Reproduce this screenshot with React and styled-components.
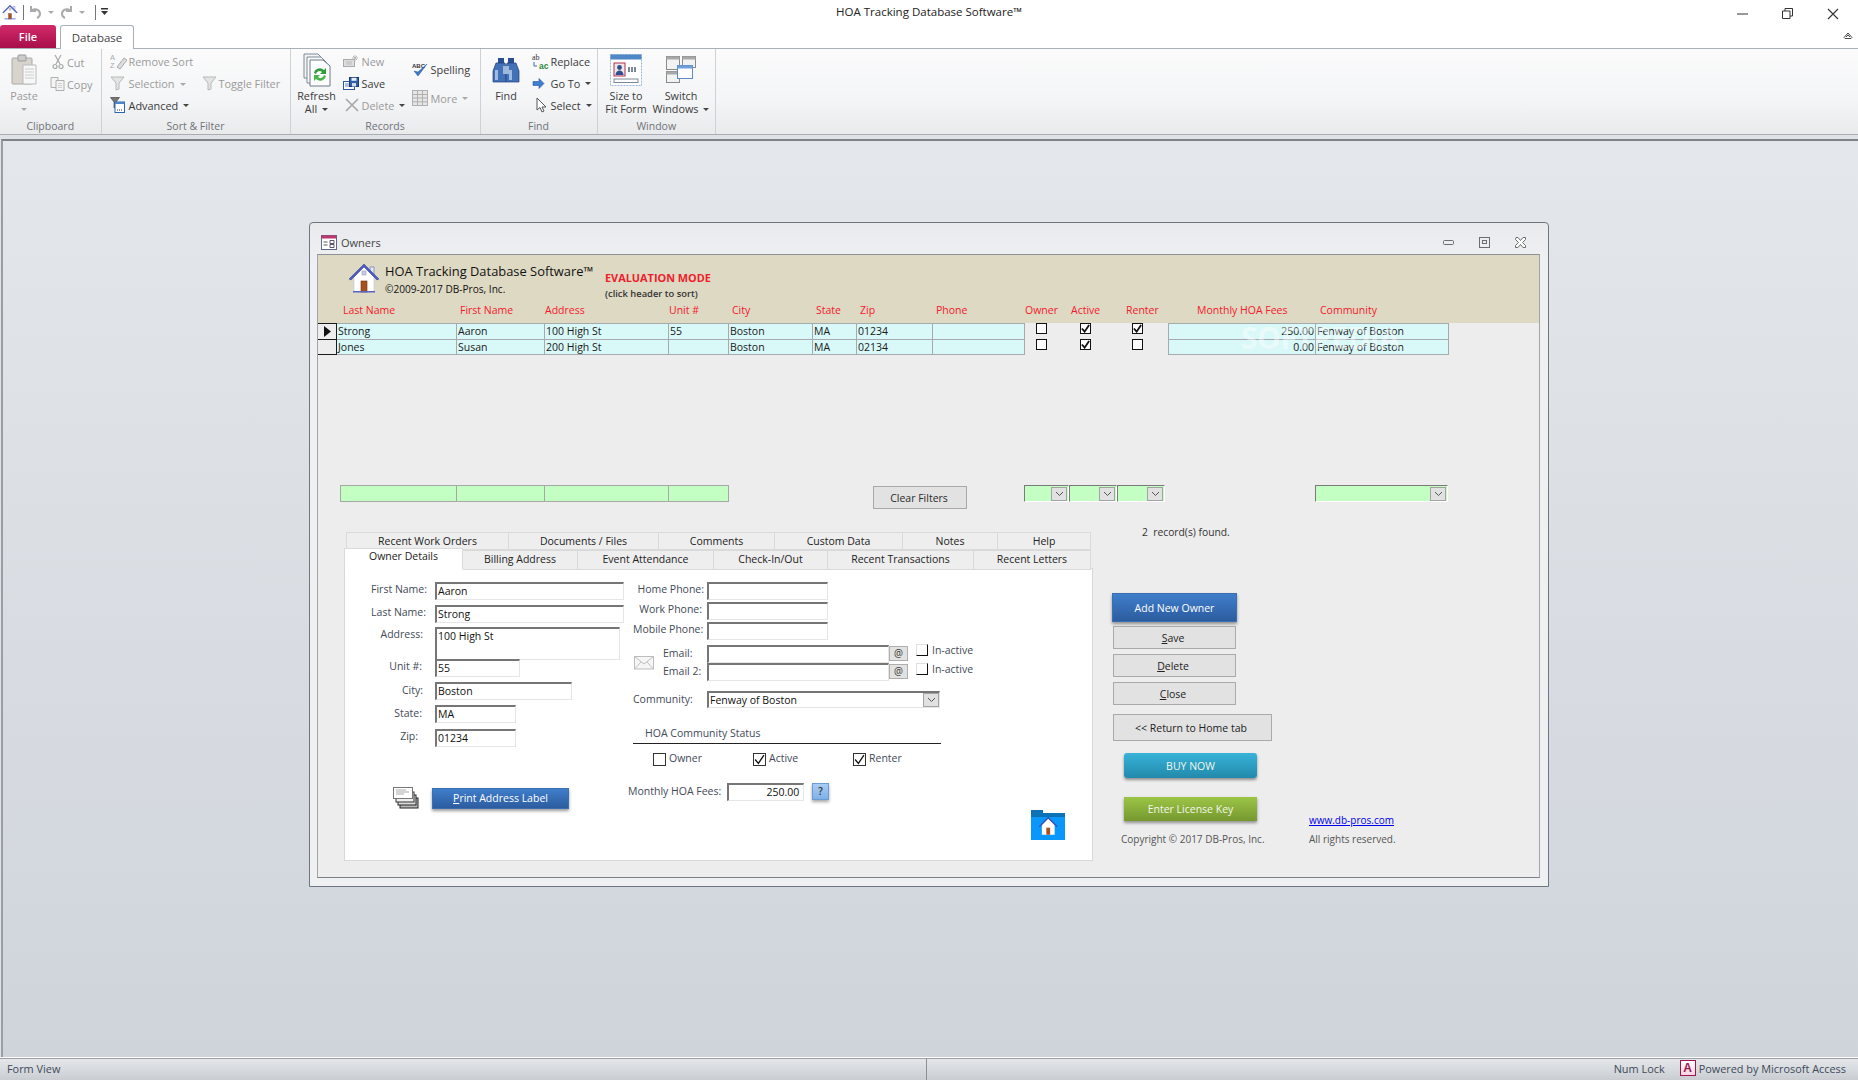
import React from 'react'
import styled, { createGlobalStyle } from 'styled-components'

const GlobalStyle = createGlobalStyle`
  html, body, #root { margin: 0; padding: 0; height: 100%; }
  body {
    overflow: hidden;
    background: #fff;
    font-family: "Open Sans", "Noto Sans", "Liberation Sans", sans-serif;
    font-size: 10.5px;
    color: #2b2b2b;
  }
  * { box-sizing: border-box; }
  u { text-decoration-thickness: 1px; }
`

const Shell = styled.div`
  width: 1858px;
  height: 1080px;
  display: flex;
  flex-direction: column;
  overflow: hidden;
`

/* ---- title bar ---- */
const TitleBar = styled.div`
  height: 25px;
  flex: none;
  display: grid;
  grid-template-columns: 1fr auto 1fr;
  align-items: center;
  background: #fff;
`

const Qat = styled.div`
  display: flex;
  align-items: center;
  padding: 0 0 1px 2px;
  gap: 3px;
`

const QatSep = styled.span`
  width: 1px;
  height: 15px;
  background: #777;
  margin: 0 2px 0 ${p => p.$ml || 2}px;
`

const QatDrop = styled.span`
  width: 0;
  height: 0;
  border-left: 3px solid transparent;
  border-right: 3px solid transparent;
  border-top: 3px solid #aaa;
  margin: 0 3px;
`

const WindowTitle = styled.div`
  font-size: 11.5px;
  color: #222;
  padding-bottom: 2px;
`

const WinControls = styled.div`
  display: flex;
  justify-content: flex-end;
  gap: 34px;
  padding: 2px 19px 0 0;
  align-items: center;
`

/* ---- ribbon tabs ---- */
const TabStrip = styled.div`
  height: 24px;
  flex: none;
  display: flex;
  align-items: flex-end;
  gap: 4px;
  position: relative;
  border-bottom: 1px solid #a9b0b8;
  background: #fff;
`

const FileTab = styled.div`
  width: 56px;
  height: 23px;
  background: linear-gradient(#d22a6a, #a80f4a);
  color: #fff;
  font-size: 11px;
  font-weight: 600;
  border-radius: 3px 3px 0 0;
  display: flex;
  align-items: center;
  justify-content: center;
`

const RibbonTab = styled.div`
  width: 74px;
  height: 24px;
  margin-bottom: -1px;
  background: #fff;
  border: 1px solid #a9b0b8;
  border-bottom: none;
  border-radius: 3px 3px 0 0;
  font-size: 11.5px;
  display: flex;
  align-items: center;
  justify-content: center;
  color: #444;
`

const Collapse = styled.span`
  position: absolute;
  right: 5px;
  top: 7px;
  display: flex;
`

/* ---- ribbon ---- */
const Ribbon = styled.div`
  height: 86px;
  flex: none;
  display: flex;
  background: linear-gradient(#fbfbfc, #f4f5f6 60%, #e9eaec);
  border-bottom: 1px solid #a9adb2;
`

const Group = styled.div`
  width: ${p => p.$w}px;
  display: flex;
  flex-direction: column;
  border-right: 1px solid #cfd1d4;
`

const GroupBody = styled.div`
  flex: 1;
  display: flex;
  padding: 2px 0 0 ${p => p.$pl || 0}px;
  min-height: 0;
`

const GroupLabel = styled.div`
  height: 18px;
  text-align: center;
  font-size: 10.5px;
  line-height: 20px;
  color: #6e7378;
`

const BigBtn = styled.div`
  width: ${p => p.$w}px;
  flex: none;
  display: flex;
  flex-direction: column;
  align-items: center;
  font-size: 10.8px;
  line-height: 13px;
  text-align: center;
  white-space: nowrap;
  color: ${p => (p.$off ? '#9a9a9a' : '#3a3a3a')};
`

const BigIcon = styled.div`
  height: 37px;
  display: flex;
  align-items: center;
  justify-content: center;
  margin-bottom: 1px;
`

const Stack = styled.div`
  display: flex;
  flex-direction: column;
  width: ${p => (p.$w ? `${p.$w}px` : 'auto')};
  flex: none;
  padding-top: ${p => p.$top || 0}px;
  gap: ${p => p.$gap || 0}px;
`

const SmallBtn = styled.div`
  height: 22px;
  display: flex;
  align-items: center;
  font-size: 10.9px;
  white-space: nowrap;
  color: ${p => (p.$off ? '#9a9a9a' : '#3a3a3a')};
`

const SmallIcon = styled.span`
  width: ${p => p.$w || 19}px;
  flex: none;
  display: flex;
  align-items: center;
  justify-content: ${p => p.$align || 'flex-start'};
`

const SelectionSlot = styled.span`
  width: 73px;
`

const Caret = styled.span`
  display: inline-block;
  width: 0;
  height: 0;
  margin-left: ${p => (p.$flush ? 0 : 5)}px;
  vertical-align: 2px;
  border-left: 3px solid transparent;
  border-right: 3px solid transparent;
  border-top: 3px solid ${p => (p.$off ? '#aaa' : '#444')};
`

/* ---- client area ---- */
const Client = styled.div`
  flex: 1;
  min-height: 0;
  display: flex;
  background: #dfe2e6;
  padding: 4px 0 0 1px;
`

const MdiArea = styled.div`
  flex: 1;
  min-width: 0;
  background: linear-gradient(#e4e7eb, #cfd4db);
  border-top: 2px solid #7f8388;
  border-left: 2px solid #9a9ea3;
  padding: 81px 0 0 306px;
`

const MdiWindow = styled.div`
  width: 1240px;
  height: 665px;
  display: flex;
  flex-direction: column;
  border: 1px solid #6f7680;
  border-radius: 4px 4px 0 0;
  background: linear-gradient(#e8eaee, #eef0f2 40px);
  padding: 0 8px 8px 7px;
`

const MdiTitle = styled.div`
  height: 31px;
  flex: none;
  display: flex;
  align-items: center;
  padding: 8px 14px 0 4px;
  gap: 4px;
  font-size: 11px;
  color: #444;
`

const MdiButtons = styled.div`
  margin-left: auto;
  display: flex;
  align-items: center;
  gap: 25px;
`

const FormBody = styled.div`
  flex: 1;
  min-height: 0;
  display: flex;
  flex-direction: column;
  background: #ededed;
  border-top: 1px solid #8d9095;
  border-left: 1px solid #a0a3a8;
  border-right: 1px solid #a0a3a8;
  border-bottom: 1px solid #7d8187;
`

const Banner = styled.div`
  height: 68px;
  flex: none;
  background: #ded9c3;
  display: flex;
  flex-direction: column;
`

const BrandRow = styled.div`
  flex: 1;
  min-height: 0;
  display: flex;
  padding: 7px 0 0 30px;
`

const BrandText = styled.div`
  margin-left: 5px;
  width: 220px;
  color: #111;
`

const BrandName = styled.div`
  font-size: 12.9px;
  line-height: 17px;
  margin-top: 1px;
  white-space: nowrap;
`

const BrandCopy = styled.div`
  font-size: 10.1px;
  line-height: 13px;
  margin-top: 3px;
`

const EvalBox = styled.div`
  padding-top: 9px;
`

const EvalTitle = styled.div`
  font-size: 10.9px;
  font-weight: 700;
  line-height: 14px;
  color: #f01c2c;
`

const EvalHint = styled.div`
  font-size: 9.4px;
  font-weight: 600;
  line-height: 12px;
  margin-top: 3px;
  color: #333;
`

const COLUMNS = '19px 120px 88px 124px 60px 84px 44px 76px 92px 36px 51px 56px 148px 133px'

const HeaderRow = styled.div`
  display: grid;
  grid-template-columns: ${COLUMNS};
  height: 22px;
  flex: none;
  align-items: flex-start;
  line-height: 14px;
  padding-top: 2px;
`

const HeaderLabel = styled.div`
  font-size: 10.5px;
  color: #f4182c;
  padding-left: ${p => p.$pad || 0}px;
  white-space: nowrap;
`

const GridWrap = styled.div`
  position: relative;
  height: 162px;
  flex: none;
`

const GridRow = styled.div`
  display: grid;
  grid-template-columns: ${COLUMNS};
  height: 16px;
`

const RowSelector = styled.div`
  border: 1px solid #1c1c1c;
  border-left: none;
  border-bottom-width: ${p => (p.$last ? 1 : 0)}px;
  background: #ededed;
  display: flex;
  align-items: center;
  justify-content: center;
`

const Cell = styled.div`
  background: #d9f8f8;
  border-top: 1px solid #a6aaae;
  border-right: 1px solid #a6aaae;
  border-bottom: ${p => (p.$last ? '1px solid #a6aaae' : 'none')};
  border-left: ${p => (p.$first ? '1px solid #a6aaae' : 'none')};
  font-size: 10.5px;
  line-height: 14px;
  padding: 0 1px;
  color: #1a1a1a;
  white-space: nowrap;
  overflow: hidden;
  text-align: ${p => (p.$right ? 'right' : 'left')};
`

const CheckCell = styled.div`
  display: flex;
  justify-content: center;
  padding-right: ${p => p.$pad || 0}px;
`

const GridBox = styled.span`
  width: 11px;
  height: 11px;
  border: 1px solid #111;
  background: #fff;
  display: flex;
  align-items: center;
  justify-content: center;
`

const Watermark = styled.div`
  position: absolute;
  left: 923px;
  top: -6px;
  font-size: 30px;
  font-weight: 700;
  letter-spacing: -0.5px;
  color: rgba(255, 255, 255, 0.42);
  pointer-events: none;
`

const FilterRow = styled.div`
  height: 24px;
  flex: none;
  display: flex;
  padding-left: 22px;
  align-items: flex-start;
`

const FilterBox = styled.div`
  width: ${p => p.$w}px;
  height: 17px;
  background: #c3fec3;
  border: 1px solid #a5a8a5;
  border-left: ${p => (p.$first ? '1px solid #a5a8a5' : 'none')};
`

const ClearButton = styled.div`
  width: 94px;
  height: 23px;
  margin: 1px 0 0 144px;
  background: #e2e2e2;
  border: 1px solid #a9a9a9;
  font-size: 10.5px;
  display: flex;
  align-items: center;
  justify-content: center;
  padding-right: 2px;
`

const FilterCombo = styled.div`
  width: ${p => p.$w}px;
  height: 17px;
  margin-left: ${p => p.$ml || 0}px;
  background: #c3fec3;
  border-top: 1px solid #7a7a7a;
  border-left: 1px solid #7a7a7a;
  border-right: 1px solid #fff;
  border-bottom: 1px solid #fff;
  display: flex;
  justify-content: flex-end;
  align-items: center;
  padding-right: 1px;
`

const ComboArrow = styled.span`
  width: 16px;
  height: 14px;
  background: #e1e1e1;
  border: 1px solid #a3a3a3;
  display: flex;
  align-items: center;
  justify-content: center;
`

const InputArrow = styled(ComboArrow)`
  position: absolute;
  right: 0;
  top: 0;
`

const Lower = styled.div`
  flex: 1;
  min-height: 0;
  display: flex;
  padding: 23px 0 0 26px;
`

const TabArea = styled.div`
  width: 750px;
  flex: none;
  display: flex;
  flex-direction: column;
`

const TabRowBack = styled.div`
  display: flex;
  height: 18px;
  padding-left: 2px;
`

const TabRowFront = styled.div`
  display: flex;
  height: 18px;
  margin-top: -2px;
  position: relative;
`

const Tab = styled.div`
  width: ${p => p.$w}px;
  height: ${p => (p.$active ? 21 : p.$front ? 20 : 18)}px;
  margin-top: ${p => (p.$front && !p.$active ? 2 : 0)}px;
  background: ${p => (p.$active ? '#fff' : '#eeeeee')};
  border: 1px solid #dadada;
  border-left-width: ${p => (p.$active || p.$firstBack ? 1 : 0)}px;
  border-bottom-width: ${p => (p.$active ? 0 : 1)}px;
  font-size: 10.5px;
  line-height: ${p => (p.$active ? 15 : 16)}px;
  text-align: center;
  color: #222;
  white-space: nowrap;
  position: relative;
  z-index: ${p => (p.$active ? 2 : 1)};
`

const TabPanel = styled.div`
  width: 749px;
  height: 293px;
  margin-top: 2px;
  background: #fff;
  border: 1px solid #d8d8d8;
  display: flex;
  position: relative;
`

const LeftFields = styled.div`
  width: 280px;
  flex: none;
  padding-top: 13px;
  display: flex;
  flex-direction: column;
`

const FieldRow = styled.div`
  display: flex;
  align-items: flex-start;
  margin-top: ${p => p.$top || 0}px;
`

const FieldLabel = styled.div`
  width: ${p => p.$w}px;
  flex: none;
  margin-left: ${p => p.$ml || 0}px;
  text-align: right;
  padding-right: ${p => p.$pr || 0}px;
  padding-top: ${p => p.$pt || 0}px;
  font-size: 10.5px;
  line-height: 14px;
  color: #3f4a57;
  white-space: nowrap;
`

const Input = styled.div`
  width: ${p => p.$w}px;
  height: ${p => p.$h || 18}px;
  flex: none;
  border-top: 2px solid #767676;
  border-left: 2px solid #767676;
  border-right: 1px solid #e6e6e6;
  border-bottom: 1px solid #e6e6e6;
  background: #fff;
  font-size: 10.5px;
  line-height: 14px;
  padding: 0 1px 0 1px;
  color: #111;
  text-align: ${p => (p.$right ? 'right' : 'left')};
  white-space: nowrap;
  position: relative;
`

const PrintRow = styled.div`
  display: flex;
  align-items: center;
  margin-top: 40px;
  padding-left: 48px;
  gap: 13px;
`

const BlueButton = styled.div`
  width: ${p => p.$w}px;
  height: ${p => p.$h}px;
  flex: none;
  background: linear-gradient(#3f7ecb, #2c5c9f);
  border: 1px solid #3b6fb4;
  box-shadow: 0 2px 3px rgba(0, 0, 0, 0.4);
  color: #fff;
  font-size: 10.5px;
  display: flex;
  align-items: center;
  justify-content: center;
`

const MidFields = styled.div`
  width: 340px;
  flex: none;
  padding-top: 13px;
  padding-left: 8px;
  display: flex;
  flex-direction: column;
`

const EmailBlock = styled.div`
  display: grid;
  grid-template-columns: 30px 44px 182px 27px auto;
  grid-auto-rows: 18px;
  margin-top: 5px;
  align-items: start;
`

const Envelope = styled.div`
  grid-row: 1 / span 2;
  padding-top: 11px;
  padding-left: 1px;
`

const EmailLabel = styled.div`
  grid-column: 2;
  font-size: 10.5px;
  color: #3f4a57;
  line-height: 14px;
  padding-top: 1px;
  white-space: nowrap;
`

const AtButton = styled.div`
  width: 19px;
  height: 15px;
  margin-top: 1px;
  background: #e2e2e2;
  border: 1px solid #aeaeae;
  font-size: 10px;
  line-height: 12px;
  text-align: center;
  color: #333;
`

const Inactive = styled.div`
  display: flex;
  align-items: center;
  font-size: 10.5px;
  gap: 4px;
  color: #3f4a57;
  white-space: nowrap;
  margin-top: ${p => p.$mt || 0}px;
`

const FlatBox = styled.span`
  width: 12px;
  height: 12px;
  border-right: 1px solid #111;
  border-bottom: 1px solid #111;
  border-top: 1px solid #e0e0e0;
  border-left: 1px solid #e0e0e0;
`

const StatusHead = styled.div`
  width: 308px;
  margin: 18px 0 0 0;
  padding: 0 0 2px 12px;
  border-bottom: 1px solid #222;
  font-size: 10.5px;
  line-height: 15px;
  color: #3f4a57;
`

const StatusRow = styled.div`
  display: flex;
  padding: 9px 0 0 20px;
`

const StatusItem = styled.div`
  width: 100px;
  display: flex;
  align-items: flex-start;
  gap: 3px;
  font-size: 10.5px;
  line-height: 11px;
  color: #3f4a57;
`

const StatusBox = styled.span`
  width: 13px;
  height: 13px;
  flex: none;
  border: 1px solid #333;
  background: #fff;
  display: flex;
  align-items: center;
  justify-content: center;
`

const HelpButton = styled.div`
  width: 17px;
  height: 17px;
  margin-left: 8px;
  background: linear-gradient(#a9cdf3, #7fb0e6);
  border: 1px solid #6d9bd4;
  box-shadow: 0 2px 3px rgba(0, 0, 0, 0.35);
  font-size: 10px;
  font-weight: 600;
  text-align: center;
  line-height: 14px;
  color: #333;
`

const FolderSpot = styled.div`
  position: absolute;
  left: 686px;
  top: 241px;
  display: flex;
`

const Side = styled.div`
  flex: 1;
  display: flex;
  position: relative;
  flex-direction: column;
  padding: 61px 0 0 18px;
`

const FoundText = styled.div`
  position: absolute;
  left: 48px;
  top: -7px;
  font-size: 10.3px;
  line-height: 14px;
  color: #333;
  white-space: nowrap;
`

const GrayButton = styled.div`
  width: ${p => p.$w}px;
  height: ${p => p.$h}px;
  margin-top: ${p => p.$mt || 0}px;
  margin-left: 1px;
  background: #e2e2e2;
  border: 1px solid #aaaaaa;
  font-size: 10.5px;
  color: #222;
  display: flex;
  align-items: center;
  justify-content: center;
  padding-right: 3px;
`

const GradButton = styled.div`
  width: 133px;
  height: ${p => p.$h}px;
  margin-top: ${p => p.$mt}px;
  margin-left: 12px;
  background: ${p => p.$bg};
  border-radius: ${p => p.$r || 0}px;
  box-shadow: 0 2px 3px rgba(0, 0, 0, 0.4);
  color: #f2f6ea;
  font-size: 10.5px;
  display: flex;
  align-items: center;
  justify-content: center;
`

const FootRow = styled.div`
  display: flex;
  margin-top: ${p => p.$mt || 0}px;
  font-size: 10px;
  line-height: 14px;
  color: #555;
  white-space: nowrap;
`

const FootCell = styled.div`
  width: ${p => p.$w}px;
  flex: none;
  padding-left: ${p => p.$pad || 0}px;
`

const Link = styled.a`
  color: #0000ee;
  text-decoration: underline;
`

/* ---- status bar ---- */
const StatusBar = styled.div`
  height: 23px;
  flex: none;
  border-top: 1px solid #fff;
  display: flex;
  background: linear-gradient(#e6e8eb, #c9cdd2);
  box-shadow: inset 0 1px 0 #9aa0a6;
  font-size: 10.9px;
  color: #3e4a5a;
`

const StatusLeft = styled.div`
  width: 927px;
  padding: 0 0 2px 7px;
  display: flex;
  align-items: center;
  border-right: 1px solid #8b9096;
`

const StatusRight = styled.div`
  flex: 1;
  display: flex;
  align-items: center;
  justify-content: flex-end;
  padding: 0 12px 2px 0;
`

const AccessBadge = styled.span`
  width: 16px;
  height: 16px;
  margin: 0 3px 0 15px;
  border: 1px solid #a0154f;
  background: linear-gradient(#fff, #f6d3e0);
  color: #a0154f;
  font-size: 12px;
  font-weight: 800;
  font-family: "Liberation Sans", sans-serif;
  display: flex;
  align-items: center;
  justify-content: center;
`

/* ---- drawings ---- */
const HouseIcon = ({ size = 32 }) => (
  <svg width={size} height={size} viewBox="0 0 32 32">
    <rect x="22" y="5" width="4" height="9" fill="#e4e6f4" stroke="#7d86c8" strokeWidth=".8" />
    <path d="M6 15 16 4l10 11v15H6z" fill="#fff" stroke="#c8cbe6" strokeWidth=".7" />
    <path d="M1 17 16 2l15 15-2 1L16 5 3 18z" fill="#4b5bc0" stroke="#2e3a8c" strokeWidth=".5" />
    <rect x="14" y="9" width="4" height="4" fill="#c9cce0" stroke="#8a8fb0" strokeWidth=".5" />
    <rect x="13" y="19" width="6" height="11" fill="#a8511e" stroke="#70330f" strokeWidth=".6" />
    <rect x="5" y="29" width="22" height="1.5" fill="#5a63c0" />
  </svg>
)

const ClipboardIcon = () => (
  <svg width="28" height="32" viewBox="0 0 28 32">
    <rect x="2" y="4" width="20" height="26" rx="1" fill="#d8d4cc" stroke="#aaa" />
    <rect x="8" y="1" width="8" height="6" rx="1" fill="#ccc" stroke="#999" />
    <path d="M13 11h13v19H13z" fill="#f7f7f7" stroke="#bbb" />
    <path d="M15 15h9M15 18h9M15 21h9M15 24h9" stroke="#ccc" />
  </svg>
)

const ScissorsIcon = () => (
  <svg width="12" height="16" viewBox="0 0 12 16" fill="none" stroke="#a8a8a8" strokeWidth="1.2">
    <path d="M3 1l5 9M9 1 4 10" />
    <circle cx="3" cy="12.5" r="2" />
    <circle cx="9" cy="12.5" r="2" />
  </svg>
)

const CopyIcon = () => (
  <svg width="15" height="14" viewBox="0 0 15 14" fill="#f4f4f4" stroke="#b0b0b0">
    <path d="M1 .5h7v10H1z" />
    <path d="M6 3.5h8v10H6z" />
    <path d="M8 6.5h4M8 8.5h4M8 10.5h4" stroke="#cfcfcf" />
  </svg>
)

const SortIcon = () => (
  <svg width="17" height="17" viewBox="0 0 17 17">
    <text x="0" y="7" fontSize="7.5" fill="#aaa" fontFamily="Liberation Sans">A</text>
    <text x="0" y="15" fontSize="7.5" fill="#aaa" fontFamily="Liberation Sans">Z</text>
    <path d="M7 14 14 5l3 2-7 9z" fill="#ddd" stroke="#aaa" />
  </svg>
)

const FilterIcon = ({ color = '#b8b8b8', fill = '#e4e4e4' }) => (
  <svg width="15" height="15" viewBox="0 0 15 15">
    <path d="M1 1h13L9 7v6l-3 1V7z" fill={fill} stroke={color} />
  </svg>
)

const AdvancedIcon = () => (
  <svg width="15" height="16" viewBox="0 0 15 16">
    <path d="M.5.5h9L6 5v5L4 11V5z" fill="#777" stroke="#333" strokeWidth=".6" />
    <rect x="5" y="5" width="9.5" height="10.5" fill="#fff" stroke="#2c65ab" />
    <rect x="5" y="5" width="9.5" height="2" fill="#4c86c8" />
    <path d="M7 13h1M9 13h1M11 13h1" stroke="#333" />
  </svg>
)

const RefreshIcon = () => (
  <svg width="28" height="34" viewBox="0 0 28 34">
    <path d="M1 1h14l6 6v18H1z" fill="#f4f4f4" stroke="#7c8a99" />
    <path d="M4 4h14l6 6v20H4z" fill="#fbfbfb" stroke="#7c8a99" />
    <path d="M7 7h13l7 6v20H7z" fill="#fff" stroke="#6d7b8a" />
    <path d="M11 20a6 6 0 0 1 10-3l2-2v6h-6l2-2a3.6 3.6 0 0 0-6 2z" fill="#2f9d3a" />
    <path d="M23 23a6 6 0 0 1-10 3l-2 2v-6h6l-2 2a3.6 3.6 0 0 0 6-2z" fill="#49b64b" />
  </svg>
)

const NewIcon = () => (
  <svg width="16" height="13" viewBox="0 0 16 13">
    <rect x=".5" y="4.5" width="11" height="7" fill="#ddd" stroke="#aaa" />
    <path d="M3 7h6M3 9h6" stroke="#bbb" />
    <path d="M12 0v6M9 3h6M10 1l4 4M14 1l-4 4" stroke="#bbb" />
  </svg>
)

const SaveIcon = () => (
  <svg width="16" height="13" viewBox="0 0 16 13">
    <rect x=".5" y="4.5" width="11" height="8" fill="#fff" stroke="#2d5a9a" />
    <path d="M2 7h7M2 9h7" stroke="#5a84bb" />
    <rect x="6.5" y=".5" width="9" height="9" fill="#2f5fa6" stroke="#1b3c72" />
    <rect x="8.5" y=".8" width="5" height="3" fill="#e8eef6" />
    <rect x="9" y="6" width="4" height="3.5" fill="#d4dde8" />
  </svg>
)

const DeleteIcon = () => (
  <svg width="14" height="14" viewBox="0 0 14 14" stroke="#a8a8a8" strokeWidth="1.7" fill="none">
    <path d="M1 1l12 12M13 1 1 13" />
  </svg>
)

const SpellIcon = () => (
  <svg width="17" height="17" viewBox="0 0 17 17">
    <text x="0" y="6.5" fontSize="6" fontWeight="700" fill="#333" fontFamily="Liberation Sans">ABC</text>
    <path d="M2 10l4 5L15 3l-9 8z" fill="#3b78c8" stroke="#24559a" strokeWidth=".5" />
  </svg>
)

const MoreIcon = () => (
  <svg width="16" height="16" viewBox="0 0 16 16" fill="#e6e6e6" stroke="#b0b0b0">
    <rect x=".5" y=".5" width="15" height="15" />
    <path d="M.5 4.5h15M.5 8h15M.5 11.8h15M5.5.5v15M10.5.5v15" />
  </svg>
)

const BinocularIcon = () => (
  <svg width="28" height="26" viewBox="0 0 28 26">
    <rect x="6" y="1" width="6" height="6" fill="#2a4f92" />
    <rect x="16" y="1" width="6" height="6" fill="#2a4f92" />
    <path d="M4 6h9l1 5v14H1V14z" fill="#4271b8" stroke="#1f3c78" strokeWidth=".7" />
    <path d="M15 6h9l3 8v11H14V11z" fill="#4271b8" stroke="#1f3c78" strokeWidth=".7" />
    <rect x="11" y="9" width="6" height="8" fill="#9db8dd" />
    <path d="M3 13h3v10H3zM17 13h3v10h-3z" fill="#9fbbe4" />
  </svg>
)

const ReplaceIcon = () => (
  <svg width="17" height="17" viewBox="0 0 17 17">
    <text x="0" y="7" fontSize="8" fill="#333" fontFamily="Liberation Serif">ab</text>
    <text x="7" y="15.5" fontSize="8.5" fontWeight="700" fill="#2e8b3b" fontFamily="Liberation Sans">ac</text>
    <path d="M2 9v4h3" fill="none" stroke="#3a6db4" />
  </svg>
)

const ArrowIcon = () => (
  <svg width="13" height="11" viewBox="0 0 13 11">
    <path d="M1 3.5h6V.5l5 5-5 5v-3H1z" fill="#3f7fd0" stroke="#28569c" strokeWidth=".6" />
  </svg>
)

const CursorIcon = () => (
  <svg width="11" height="16" viewBox="0 0 11 16">
    <path d="M1 1v12l3-2.5L6 15l2-1-2-4h4z" fill="#fff" stroke="#555" />
  </svg>
)

const SizeFormIcon = () => (
  <svg width="32" height="32" viewBox="0 0 32 32">
    <rect x=".5" y=".5" width="31" height="31" fill="#fff" stroke="#9bb6d8" strokeDasharray="2 1" />
    <rect x=".5" y=".5" width="31" height="5" fill="#4f86c6" />
    <rect x="4" y="9" width="11" height="13" fill="#f0e6e6" stroke="#b03050" />
    <circle cx="9.5" cy="13.5" r="2.4" fill="#2c4f91" />
    <path d="M5.5 21c0-6 8-6 8 0z" fill="#2c4f91" />
    <path d="M18 13h2v5h-2zM21 13h2v5h-2zM24 13h2v5h-2z" fill="#7a8796" />
    <rect x="4" y="25" width="24" height="3.5" fill="#fff" stroke="#7a8796" />
  </svg>
)

const SwitchIcon = () => (
  <svg width="30" height="27" viewBox="0 0 30 27">
    <rect x=".5" y=".5" width="13" height="13" fill="#f2f2f2" stroke="#8a8a8a" />
    <rect x=".5" y=".5" width="13" height="3" fill="#a8a8a8" />
    <rect x="16.5" y=".5" width="13" height="11" fill="#f2f2f2" stroke="#8a8a8a" />
    <rect x="16.5" y=".5" width="13" height="3" fill="#a8a8a8" />
    <rect x=".5" y="15.5" width="13" height="11" fill="#f2f2f2" stroke="#8a8a8a" />
    <rect x=".5" y="15.5" width="13" height="3" fill="#a8a8a8" />
    <rect x="11.5" y="9.5" width="15" height="13" fill="#fff" stroke="#5b8ac7" />
    <rect x="11.5" y="9.5" width="15" height="3" fill="#6e9fdb" />
  </svg>
)

const FormIcon = () => (
  <svg width="16" height="15" viewBox="0 0 16 15">
    <rect x=".5" y=".5" width="15" height="14" fill="#fff" stroke="#5c6a85" />
    <rect x=".5" y=".5" width="15" height="3" fill="#c0356e" />
    <path d="M2.5 7h4M2.5 10h4" stroke="#556" />
    <path d="M9 5.5h4v3H9zM9 9.5h4v3H9z" fill="#fff" stroke="#556" />
  </svg>
)

const Check = ({ size = 9, sw = 2, color = '#111' }) => (
  <svg width={size} height={size} viewBox="0 0 10 10" fill="none" stroke={color} strokeWidth={sw}>
    <path d="M1 5l3 3.5L9 1" />
  </svg>
)

const Chevron = () => (
  <svg width="9" height="6" viewBox="0 0 9 6" fill="none" stroke="#555" strokeWidth="1">
    <path d="M1 1l3.5 3.5L8 1" />
  </svg>
)

const MailIcon = () => (
  <svg width="20" height="14" viewBox="0 0 20 14" fill="#f6f6f6" stroke="#bdbdbd">
    <rect x=".5" y=".5" width="19" height="12.5" />
    <path d="M.5.5 10 8 19.5.5M.5 13 7 6M19.5 13 13 6" fill="none" />
  </svg>
)

const CardsIcon = () => (
  <svg width="26" height="22" viewBox="0 0 26 22">
    <rect x="7" y="11" width="18" height="10" fill="#bbb" stroke="#222" />
    <rect x="5" y="8" width="18" height="10" fill="#ddd" stroke="#222" />
    <rect x="3" y="5" width="18" height="10" fill="#eee" stroke="#333" />
    <rect x=".5" y=".5" width="19" height="11" fill="#fff" stroke="#777" />
    <path d="M3 3h10M3 5h13M3 7h8" stroke="#aaa" />
  </svg>
)

const FolderHome = () => (
  <svg width="34" height="30" viewBox="0 0 34 30">
    <rect x="0" y="0" width="12" height="4" fill="#0b72b5" />
    <rect x="0" y="3" width="34" height="4" fill="#0b72b5" />
    <rect x="0" y="7" width="34" height="23" fill="#0a97fb" />
    <g transform="translate(7 5.5) scale(.64)">
      <path d="M6 15 16 4l10 11v15H6z" fill="#fff" />
      <path d="M1 17 16 2l15 15-2 1L16 5 3 18z" fill="#3c4bb0" />
      <rect x="13" y="19" width="6" height="11" fill="#a8511e" />
    </g>
  </svg>
)

const ribbonGray = '#6d6d6d'

function App () {
  return (
    <Shell>
      <GlobalStyle />
      <TitleBar>
        <Qat>
          <HouseIcon size={16} />
          <QatSep />
          <svg width="13" height="14" viewBox="0 0 13 14" fill="none" stroke="#aaa" strokeWidth="2">
            <path d="M2 1v5h5M2 6c3-3 9-2 9 3 0 2-1 3-3 4" />
          </svg>
          <QatDrop />
          <svg width="13" height="14" viewBox="0 0 13 14" fill="none" stroke="#aaa" strokeWidth="2">
            <path d="M11 1v5H6M11 6C8 3 2 4 2 9c0 2 1 3 3 4" />
          </svg>
          <QatDrop />
          <QatSep $ml={4} />
          <svg width="7" height="8" viewBox="0 0 7 8">
            <path d="M0 0h7v1.5H0zM0 3h7L3.500 7z" fill="#333" />
          </svg>
        </Qat>
        <WindowTitle>HOA Tracking Database Software™</WindowTitle>
        <WinControls>
          <svg width="11" height="2" viewBox="0 0 11 2"><path d="M0 1h11" stroke="#333" /></svg>
          <svg width="11" height="11" viewBox="0 0 11 11" fill="#fff" stroke="#333">
            <path d="M3 .5h7.500v7.500H3z" />
            <path d="M.5 3h7.500v7.500H.5z" />
          </svg>
          <svg width="12" height="12" viewBox="0 0 12 12" stroke="#333" strokeWidth="1.1">
            <path d="M1 1l10 10M11 1 1 11" />
          </svg>
        </WinControls>
      </TitleBar>

      <TabStrip>
        <FileTab>File</FileTab>
        <RibbonTab>Database</RibbonTab>
        <Collapse>
          <svg width="10" height="7" viewBox="0 0 10 7" fill="none" stroke="#444">
            <path d="M1 5.500 5 1l4 4.500-1 1H2zM3 5l2-2 2 2" />
          </svg>
        </Collapse>
      </TabStrip>

      <Ribbon>
        <Group $w={101.5}>
          <GroupBody>
            <BigBtn $w={48} $off>
              <BigIcon><ClipboardIcon /></BigIcon>
              <div>Paste</div>
              <div><Caret $off $flush /></div>
            </BigBtn>
            <Stack>
              <SmallBtn $off><SmallIcon $align="center"><ScissorsIcon /></SmallIcon>Cut</SmallBtn>
              <SmallBtn $off><SmallIcon $align="center"><CopyIcon /></SmallIcon>Copy</SmallBtn>
            </Stack>
          </GroupBody>
          <GroupLabel>Clipboard</GroupLabel>
        </Group>

        <Group $w={189}>
          <GroupBody $pl={8}>
            <Stack>
              <SmallBtn $off><SmallIcon><SortIcon /></SmallIcon>Remove Sort</SmallBtn>
              <SmallBtn $off>
                <SmallIcon><FilterIcon /></SmallIcon>
                <SelectionSlot>Selection<Caret $off /></SelectionSlot>
                <SmallIcon $w={17}><FilterIcon /></SmallIcon>Toggle Filter
              </SmallBtn>
              <SmallBtn><SmallIcon><AdvancedIcon /></SmallIcon>Advanced<Caret /></SmallBtn>
            </Stack>
          </GroupBody>
          <GroupLabel>Sort &amp; Filter</GroupLabel>
        </Group>

        <Group $w={190}>
          <GroupBody>
            <BigBtn $w={52}>
              <BigIcon><RefreshIcon /></BigIcon>
              <div>Refresh</div>
              <div>All<Caret /></div>
            </BigBtn>
            <Stack $w={69}>
              <SmallBtn $off><SmallIcon><NewIcon /></SmallIcon>New</SmallBtn>
              <SmallBtn><SmallIcon><SaveIcon /></SmallIcon>Save</SmallBtn>
              <SmallBtn $off><SmallIcon $align="center"><DeleteIcon /></SmallIcon>Delete<Caret /></SmallBtn>
            </Stack>
            <Stack $top={7} $gap={7}>
              <SmallBtn><SmallIcon><SpellIcon /></SmallIcon>Spelling</SmallBtn>
              <SmallBtn $off><SmallIcon><MoreIcon /></SmallIcon>More<Caret $off /></SmallBtn>
            </Stack>
          </GroupBody>
          <GroupLabel>Records</GroupLabel>
        </Group>

        <Group $w={117}>
          <GroupBody>
            <BigBtn $w={51}>
              <BigIcon><BinocularIcon /></BigIcon>
              <div>Find</div>
            </BigBtn>
            <Stack>
              <SmallBtn><SmallIcon><ReplaceIcon /></SmallIcon>Replace</SmallBtn>
              <SmallBtn><SmallIcon><ArrowIcon /></SmallIcon>Go To<Caret /></SmallBtn>
              <SmallBtn><SmallIcon $align="center"><CursorIcon /></SmallIcon>Select<Caret /></SmallBtn>
            </Stack>
          </GroupBody>
          <GroupLabel>Find</GroupLabel>
        </Group>

        <Group $w={118.500}>
          <GroupBody>
            <BigBtn $w={57}>
              <BigIcon><SizeFormIcon /></BigIcon>
              <div>Size to</div>
              <div>Fit Form</div>
            </BigBtn>
            <BigBtn $w={53}>
              <BigIcon><SwitchIcon /></BigIcon>
              <div>Switch</div>
              <div>Windows<Caret /></div>
            </BigBtn>
          </GroupBody>
          <GroupLabel>Window</GroupLabel>
        </Group>
      </Ribbon>

      <Client>
        <MdiArea>
          <MdiWindow>
            <MdiTitle>
              <FormIcon />
              Owners
              <MdiButtons>
                <svg width="11" height="5" viewBox="0 0 11 5" fill="none" stroke={ribbonGray}><rect x=".5" y=".5" width="10" height="4" rx="1" /></svg>
                <svg width="11" height="11" viewBox="0 0 11 11" fill="none" stroke={ribbonGray}>
                  <rect x=".5" y=".5" width="10" height="10" />
                  <rect x="3.500" y="3.500" width="4" height="3" />
                </svg>
                <svg width="11" height="11" viewBox="0 0 11 11" fill="#fff" stroke={ribbonGray}>
                  <path d="M1 .5h2l2.500 3 2.500-3h2.500v2l-3 3 3 3v2H8l-2.500-3-2.500 3H.5v-2l3-3-3-3z" />
                </svg>
              </MdiButtons>
            </MdiTitle>

            <FormBody>
              <Banner>
                <BrandRow>
                  <HouseIcon />
                  <BrandText>
                    <BrandName>HOA Tracking Database Software™</BrandName>
                    <BrandCopy>©2009-2017 DB-Pros, Inc.</BrandCopy>
                  </BrandText>
                  <EvalBox>
                    <EvalTitle>EVALUATION MODE</EvalTitle>
                    <EvalHint>(click header to sort)</EvalHint>
                  </EvalBox>
                </BrandRow>
                <HeaderRow>
                  <span />
                  <HeaderLabel $pad={6}>Last Name</HeaderLabel>
                  <HeaderLabel $pad={3}>First Name</HeaderLabel>
                  <HeaderLabel>Address</HeaderLabel>
                  <HeaderLabel>Unit #</HeaderLabel>
                  <HeaderLabel $pad={3}>City</HeaderLabel>
                  <HeaderLabel $pad={3}>State</HeaderLabel>
                  <HeaderLabel $pad={3}>Zip</HeaderLabel>
                  <HeaderLabel $pad={3}>Phone</HeaderLabel>
                  <HeaderLabel>Owner</HeaderLabel>
                  <HeaderLabel $pad={10}>Active</HeaderLabel>
                  <HeaderLabel $pad={14}>Renter</HeaderLabel>
                  <HeaderLabel $pad={29}>Monthly HOA Fees</HeaderLabel>
                  <HeaderLabel $pad={4}>Community</HeaderLabel>
                </HeaderRow>
              </Banner>

              <GridWrap>
                <GridRow>
                  <RowSelector>
                    <svg width="7" height="11" viewBox="0 0 7 11"><path d="M0 0l7 5.500L0 11z" fill="#111" /></svg>
                  </RowSelector>
                  <Cell>Strong</Cell>
                  <Cell>Aaron</Cell>
                  <Cell>100 High St</Cell>
                  <Cell>55</Cell>
                  <Cell>Boston</Cell>
                  <Cell>MA</Cell>
                  <Cell>01234</Cell>
                  <Cell />
                  <CheckCell $pad={3}><GridBox /></CheckCell>
                  <CheckCell $pad={2}><GridBox><Check /></GridBox></CheckCell>
                  <CheckCell $pad={5}><GridBox><Check /></GridBox></CheckCell>
                  <Cell $first $right>250.00</Cell>
                  <Cell>Fenway of Boston</Cell>
                </GridRow>
                <GridRow>
                  <RowSelector $last />
                  <Cell $last>Jones</Cell>
                  <Cell $last>Susan</Cell>
                  <Cell $last>200 High St</Cell>
                  <Cell $last />
                  <Cell $last>Boston</Cell>
                  <Cell $last>MA</Cell>
                  <Cell $last>02134</Cell>
                  <Cell $last />
                  <CheckCell $pad={3}><GridBox /></CheckCell>
                  <CheckCell $pad={2}><GridBox><Check /></GridBox></CheckCell>
                  <CheckCell $pad={5}><GridBox /></CheckCell>
                  <Cell $first $last $right>0.00</Cell>
                  <Cell $last>Fenway of Boston</Cell>
                </GridRow>
                <Watermark>SOFTPEDIA</Watermark>
              </GridWrap>

              <FilterRow>
                <FilterBox $first $w={117} />
                <FilterBox $w={88} />
                <FilterBox $w={124} />
                <FilterBox $w={60} />
                <ClearButton>Clear Filters</ClearButton>
                <FilterCombo $w={45} $ml={57}><ComboArrow><Chevron /></ComboArrow></FilterCombo>
                <FilterCombo $w={48}><ComboArrow><Chevron /></ComboArrow></FilterCombo>
                <FilterCombo $w={48}><ComboArrow><Chevron /></ComboArrow></FilterCombo>
                <FilterCombo $w={133} $ml={150}><ComboArrow><Chevron /></ComboArrow></FilterCombo>
              </FilterRow>

              <Lower>
                <TabArea>
                  <TabRowBack>
                    <Tab $firstBack $w={163}>Recent Work Orders</Tab>
                    <Tab $w={150}>Documents / Files</Tab>
                    <Tab $w={116}>Comments</Tab>
                    <Tab $w={128}>Custom Data</Tab>
                    <Tab $w={95}>Notes</Tab>
                    <Tab $w={93}>Help</Tab>
                  </TabRowBack>
                  <TabRowFront>
                    <Tab $front $active $w={119}>Owner Details</Tab>
                    <Tab $front $w={115}>Billing Address</Tab>
                    <Tab $front $w={136}>Event Attendance</Tab>
                    <Tab $front $w={114}>Check-In/Out</Tab>
                    <Tab $front $w={146}>Recent Transactions</Tab>
                    <Tab $front $w={117}>Recent Letters</Tab>
                  </TabRowFront>
                  <TabPanel>
                    <LeftFields>
                      <FieldRow>
                        <FieldLabel $w={90} $pr={8}>First Name:</FieldLabel>
                        <Input $w={189}>Aaron</Input>
                      </FieldRow>
                      <FieldRow $top={5}>
                        <FieldLabel $w={90} $pr={9}>Last Name:</FieldLabel>
                        <Input $w={189}>Strong</Input>
                      </FieldRow>
                      <FieldRow $top={4}>
                        <FieldLabel $w={90} $pr={12}>Address:</FieldLabel>
                        <Input $w={185} $h={33}>100 High St</Input>
                      </FieldRow>
                      <FieldRow $top={-1}>
                        <FieldLabel $w={90} $pr={13}>Unit #:</FieldLabel>
                        <Input $w={85}>55</Input>
                      </FieldRow>
                      <FieldRow $top={5}>
                        <FieldLabel $w={90} $pr={12} $pt={1}>City:</FieldLabel>
                        <Input $w={137}>Boston</Input>
                      </FieldRow>
                      <FieldRow $top={5}>
                        <FieldLabel $w={90} $pr={13} $pt={1}>State:</FieldLabel>
                        <Input $w={81}>MA</Input>
                      </FieldRow>
                      <FieldRow $top={6}>
                        <FieldLabel $w={90} $pr={17}>Zip:</FieldLabel>
                        <Input $w={81}>01234</Input>
                      </FieldRow>
                      <PrintRow>
                        <CardsIcon />
                        <BlueButton $w={137} $h={21}><span><u>P</u>rint Address Label</span></BlueButton>
                      </PrintRow>
                    </LeftFields>
                    <MidFields>
                      <FieldRow>
                        <FieldLabel $w={74} $pr={3}>Home Phone:</FieldLabel>
                        <Input $w={121} />
                      </FieldRow>
                      <FieldRow $top={2}>
                        <FieldLabel $w={74} $pr={5}>Work Phone:</FieldLabel>
                        <Input $w={121} />
                      </FieldRow>
                      <FieldRow $top={2}>
                        <FieldLabel $w={74} $pr={4}>Mobile Phone:</FieldLabel>
                        <Input $w={121} />
                      </FieldRow>
                      <EmailBlock>
                        <Envelope><MailIcon /></Envelope>
                        <EmailLabel>Email:</EmailLabel>
                        <Input $w={182} />
                        <AtButton>@</AtButton>
                        <Inactive $mt={-2}><FlatBox />In-active</Inactive>
                        <EmailLabel>Email 2:</EmailLabel>
                        <Input $w={182} />
                        <AtButton>@</AtButton>
                        <Inactive $mt={-1}><FlatBox />In-active</Inactive>
                      </EmailBlock>
                      <FieldRow $top={10}>
                        <FieldLabel $w={74} $pr={20} $pt={1}>Community:</FieldLabel>
                        <Input $w={233} $h={17}>Fenway of Boston
                          <InputArrow><Chevron /></InputArrow>
                        </Input>
                      </FieldRow>
                      <StatusHead>HOA Community Status</StatusHead>
                      <StatusRow>
                        <StatusItem><StatusBox />Owner</StatusItem>
                        <StatusItem><StatusBox><Check size={11} sw={1.2} /></StatusBox>Active</StatusItem>
                        <StatusItem><StatusBox><Check size={11} sw={1.2} /></StatusBox>Renter</StatusItem>
                      </StatusRow>
                      <FieldRow $top={17}>
                        <FieldLabel $w={99} $ml={-5} $pr={6} $pt={1}>Monthly HOA Fees:</FieldLabel>
                        <Input $w={77} $right>250.00&nbsp;</Input>
                        <HelpButton>?</HelpButton>
                      </FieldRow>
                    </MidFields>
                    <FolderSpot><FolderHome /></FolderSpot>
                  </TabPanel>
                </TabArea>
                <Side>
                  <FoundText>2&nbsp;&nbsp;record(s) found.</FoundText>
                  <BlueButton $w={125} $h={29}>Add New Owner</BlueButton>
                  <GrayButton $w={123} $h={23} $mt={4}><span><u>S</u>ave</span></GrayButton>
                  <GrayButton $w={123} $h={23} $mt={5}><span><u>D</u>elete</span></GrayButton>
                  <GrayButton $w={123} $h={23} $mt={5}><span><u>C</u>lose</span></GrayButton>
                  <GrayButton $w={159} $h={27} $mt={9}>&lt;&lt; Return to Home tab</GrayButton>
                  <GradButton $h={25} $mt={12} $r={3} $bg="linear-gradient(#38b3d8, #2289ab)">BUY NOW</GradButton>
                  <GradButton $h={24} $mt={19} $bg="linear-gradient(#9cc546, #76982f)">Enter License Key</GradButton>
                  <FootRow $mt={-8}>
                    <FootCell $w={197} />
                    <FootCell $w={100}><Link href="#">www.db-pros.com</Link></FootCell>
                  </FootRow>
                  <FootRow $mt={5}>
                    <FootCell $w={197} $pad={9}>Copyright © 2017 DB-Pros, Inc.</FootCell>
                    <FootCell $w={100}>All rights reserved.</FootCell>
                  </FootRow>
                </Side>
              </Lower>
            </FormBody>
          </MdiWindow>
        </MdiArea>
      </Client>

      <StatusBar>
        <StatusLeft>Form View</StatusLeft>
        <StatusRight>
          Num Lock
          <AccessBadge>A</AccessBadge>
          Powered by Microsoft Access
        </StatusRight>
      </StatusBar>
    </Shell>
  )
}

export default App
